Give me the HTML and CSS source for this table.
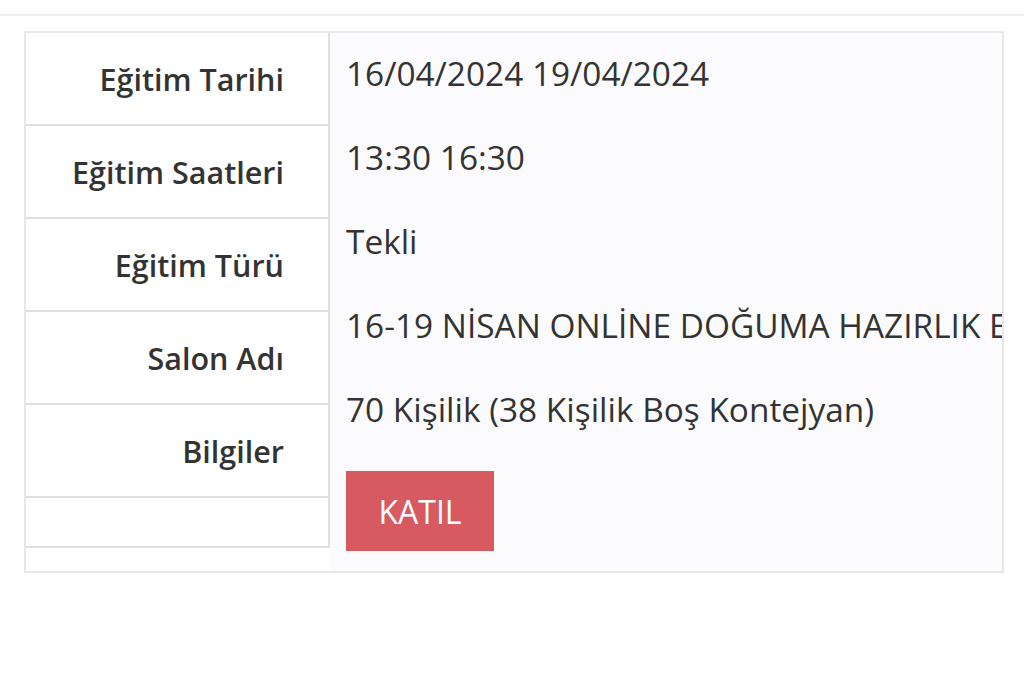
FILE: index.html
```html
<!DOCTYPE html>
<html lang="tr">
<head>
    <meta charset="UTF-8">
    <meta name="viewport" content="width=device-width, initial-scale=1.0">
    <title>Eğitim Detayı</title>
    <link rel="stylesheet" href="styles.css">
</head>
<body>
    <div class="top-bar"></div>
    <div class="page">
        <div class="detail">
            <div class="labels">
                <div class="label-cell">Eğitim Tarihi</div>
                <div class="label-cell">Eğitim Saatleri</div>
                <div class="label-cell">Eğitim Türü</div>
                <div class="label-cell">Salon Adı</div>
                <div class="label-cell">Bilgiler</div>
                <div class="label-cell empty"></div>
            </div>
            <div class="values">
                <div class="value">16/04/2024 19/04/2024</div>
                <div class="value">13:30 16:30</div>
                <div class="value">Tekli</div>
                <div class="value">16-19 NİSAN ONLİNE DOĞUMA HAZIRLIK EĞİTİMİ</div>
                <div class="value">70 Kişilik (38 Kişilik Boş Kontejyan)</div>
                <button class="join-btn">KATIL</button>
            </div>
        </div>
    </div>
</body>
</html>
```

FILE: styles.css
```css
body {
    font-family: 'Open Sans', 'Noto Sans', sans-serif;
    margin: 0;
    color: #333333;
    background: #ffffff;
}
.top-bar {
    height: 14px;
    border-bottom: 2px solid #eeeeee;
}
.page {
    padding: 15px 20px 0 24px;
}
.detail {
    width: 976px;
    display: flex;
    align-items: flex-start;
    border: 2px solid #e8e8e8;
}
.labels {
    width: 302px;
    border-right: 2px solid #e0e0e0;
    flex-shrink: 0;
}
.label-cell {
    height: 91px;
    border-bottom: 2px solid #e0e0e0;
    display: flex;
    align-items: center;
    justify-content: flex-end;
    padding-right: 44px;
    font-size: 30.5px;
    font-weight: 600;
}
.label-cell.empty {
    height: 48px;
}
.values {
    flex: 1;
    min-width: 0;
    align-self: stretch;
    background: #fbfbfd;
    padding: 0 0 20px 16px;
    overflow: hidden;
    white-space: nowrap;
}
.value {
    font-size: 33.4px;
    line-height: 84px;
    margin-top: -2px;
}
.value + .value {
    margin-top: 0;
}
.join-btn {
    margin-top: 20px;
    width: 148px;
    height: 80px;
    border: none;
    background: #d65a5f;
    color: #ffffff;
    font-family: 'Open Sans', 'Noto Sans', sans-serif;
    font-size: 32px;
    padding: 0;
}
```
